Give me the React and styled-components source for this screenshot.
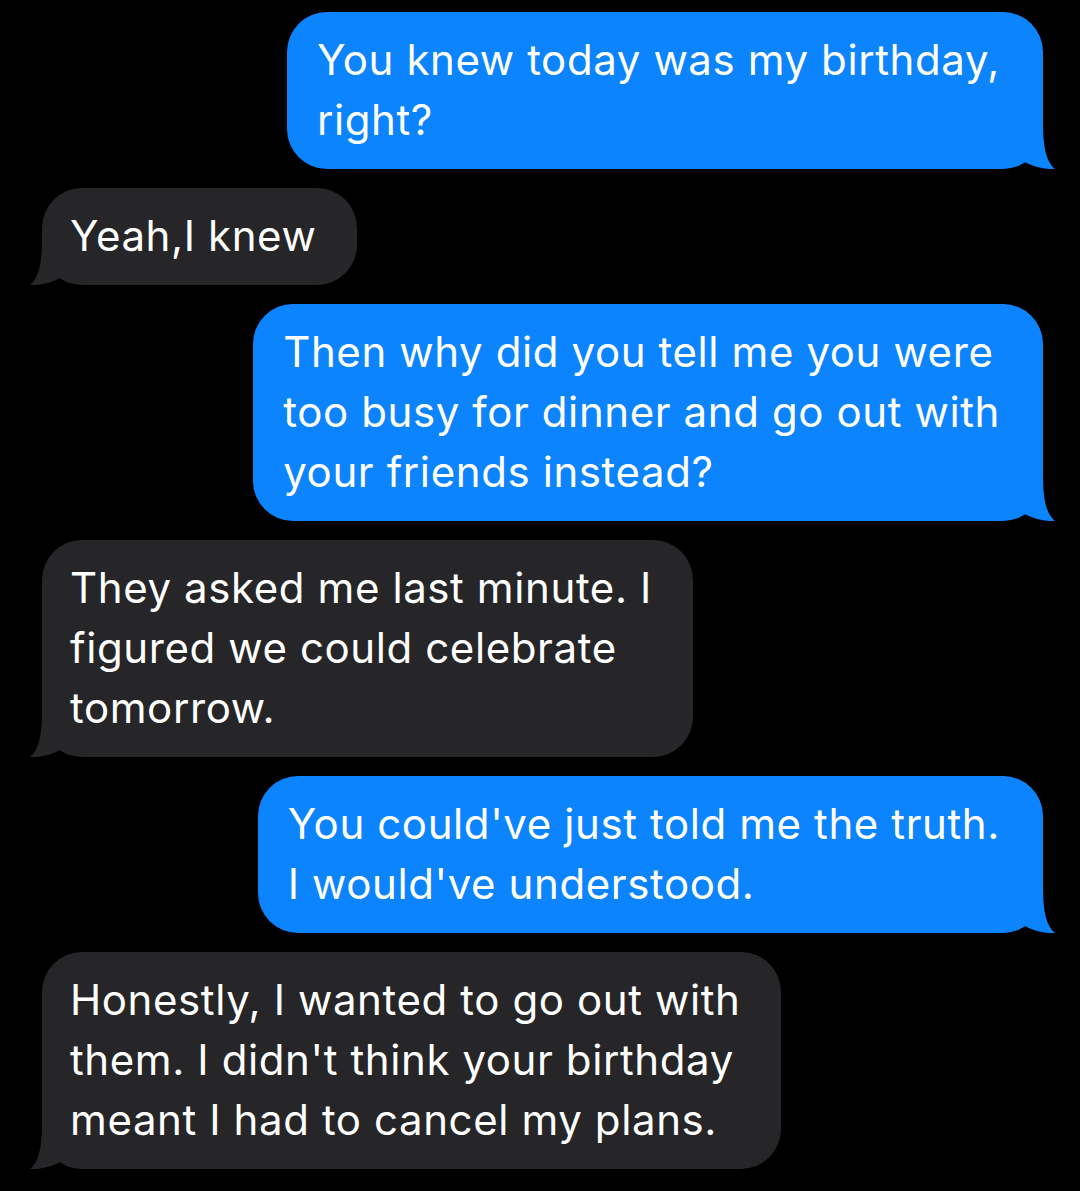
import styled, { createGlobalStyle } from "styled-components";

const GlobalStyle = createGlobalStyle`
  html, body {
    margin: 0;
    padding: 0;
    background: #000;
  }
  body {
    font-family: Inter, "Liberation Sans", Arial, sans-serif;
    -webkit-font-smoothing: antialiased;
  }
`;

const Thread = styled.div`
  display: flex;
  flex-direction: column;
  gap: 19px;
  padding: 12px 37px 0 42px;
  min-height: 1191px;
  box-sizing: border-box;
  background: #000;
`;

const Bubble = styled.div`
  position: relative;
  align-self: ${(p) => (p.$sent ? "flex-end" : "flex-start")};
  width: fit-content;
  box-sizing: border-box;
  padding: ${(p) => (p.$sent ? "18px 43px 19px 30px" : "18px 41px 19px 28px")};
  border-radius: 40px;
  background: ${(p) => (p.$sent ? "#0b84fe" : "#262628")};
  color: #fff;
  font-size: 42px;
  letter-spacing: 0.6px;
  line-height: 60px;
  white-space: nowrap;
`;

const Tail = styled.svg`
  position: absolute;
  bottom: 0;
  width: 40px;
  height: 45px;
  ${(p) => (p.$sent ? "right: -12px;" : "left: -12px; transform: scaleX(-1);")}
`;

const BubbleTail = ({ sent }) => (
  <Tail $sent={sent} viewBox="0 0 40 45">
    <path
      d="M8 0 L28 0 C28 22 31 38 40 45 C30 45.5 18 43 8 37 Z"
      fill={sent ? "#0b84fe" : "#262628"}
    />
  </Tail>
);

const Message = ({ sent, lines }) => (
  <Bubble $sent={sent}>
    {lines.map((l, i) => (
      <div key={i}>{l}</div>
    ))}
    <BubbleTail sent={sent} />
  </Bubble>
);

const messages = [
  { sent: true, lines: ["You knew today was my birthday,", "right?"] },
  { sent: false, lines: ["Yeah,I knew"] },
  {
    sent: true,
    lines: [
      "Then why did you tell me you were",
      "too busy for dinner and go out with",
      "your friends instead?",
    ],
  },
  {
    sent: false,
    lines: ["They asked me last minute. I", "figured we could celebrate", "tomorrow."],
  },
  {
    sent: true,
    lines: ["You could've just told me the truth.", "I would've understood."],
  },
  {
    sent: false,
    lines: [
      "Honestly, I wanted to go out with",
      "them. I didn't think your birthday",
      "meant I had to cancel my plans.",
    ],
  },
];

export default function App() {
  return (
    <>
      <GlobalStyle />
      <Thread>
        {messages.map((m, i) => (
          <Message key={i} sent={m.sent} lines={m.lines} />
        ))}
      </Thread>
    </>
  );
}
